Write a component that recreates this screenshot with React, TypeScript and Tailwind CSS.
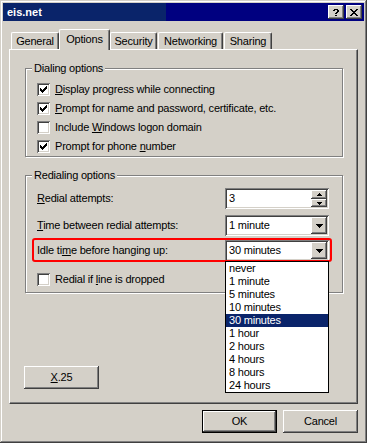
import React from 'react';

// classic win2k bevels
const raised =
  'shadow-[inset_-1px_-1px_#404040,inset_1px_1px_#fff,inset_-2px_-2px_#808080,inset_2px_2px_#d4d0c8]';
const sunken =
  'shadow-[inset_1px_1px_#808080,inset_-1px_-1px_#fff,inset_2px_2px_#404040,inset_-2px_-2px_#d4d0c8]';

const CHECK = ['......#', '.....##', '#...###', '##.###.', '#####..', '.###...', '..#....'];
const CLOSE = ['##....##', '.##..##.', '..####..', '...##...', '..####..', '.##..##.', '##....##'];
const HELP = ['..####..', '.##..##.', '.....##.', '....##..', '...##...', '........', '...##...'];
const DOWN = ['#######', '.#####.', '..###..', '...#...'];
const SPIN_UP = ['..#..', '.###.', '#####'];
const SPIN_DOWN = ['#####', '.###.', '..#..'];

const Pixels = ({ rows, color = '#000' }: { rows: string[]; color?: string }) => (
  <svg width={rows[0].length} height={rows.length} shapeRendering="crispEdges" className="block">
    {rows.flatMap((r, y) =>
      r.split('').map((c, x) =>
        c === '#' ? <rect key={`${x}-${y}`} x={x} y={y} width={1} height={1} fill={color} /> : null
      )
    )}
  </svg>
);

const TitleButton = ({ rows }: { rows: string[] }) => (
  <div className={`w-[16px] h-[14px] bg-[#d4d0c8] flex items-center justify-center ${raised}`}>
    <Pixels rows={rows} />
  </div>
);

const Checkbox = ({ checked }: { checked?: boolean }) => (
  <div className={`w-[13px] h-[13px] shrink-0 bg-white flex items-center justify-center ${sunken}`}>
    {checked && <Pixels rows={CHECK} />}
  </div>
);

const CheckRow = ({ checked, children }: { checked?: boolean; children: React.ReactNode }) => (
  <div className="h-[19px] flex items-center gap-[5px]">
    <Checkbox checked={checked} />
    <span>{children}</span>
  </div>
);

const Combo = ({ value }: { value: string }) => (
  <div className={`w-[104px] h-[21px] bg-white flex items-center p-[2px] ${sunken}`}>
    <span className="flex-1 pl-[2px]">{value}</span>
    <div className={`w-[16px] h-[17px] bg-[#d4d0c8] flex items-center justify-center ${raised}`}>
      <Pixels rows={DOWN} />
    </div>
  </div>
);

const Button = ({ children, isDefault }: { children: React.ReactNode; isDefault?: boolean }) => (
  <div className={`w-[75px] h-[23px] ${isDefault ? 'border border-black' : ''}`}>
    <div className={`w-full h-full bg-[#d4d0c8] flex items-center justify-center ${raised}`}>{children}</div>
  </div>
);

const GroupBox = ({ label, className, children }: { label: string; className: string; children: React.ReactNode }) => (
  <div className={`relative ml-[15px] mt-[18px] w-[318px] border border-[#808080] shadow-[inset_1px_1px_#fff,1px_1px_#fff] ${className}`}>
    <span className="absolute top-[-7px] left-[6px] px-[2px] bg-[#d4d0c8]">{label}</span>
    {children}
  </div>
);

const Tab = ({ label, selected, w }: { label: string; selected?: boolean; w: string }) => (
  <div
    className={`${w} flex items-center justify-center bg-[#d4d0c8] border-l border-t border-r border-l-white border-t-white border-r-[#404040] rounded-t-[2px] shadow-[inset_-1px_0_#808080] ${
      selected ? 'relative z-10 h-[21px] -mb-[1px] pb-[2px]' : 'h-[17px]'
    }`}
  >
    {label}
  </div>
);

const times = ['never', '1 minute', '5 minutes', '10 minutes', '30 minutes', '1 hour', '2 hours', '4 hours', '8 hours', '24 hours'];

export default function App() {
  return (
    <div
      className={`w-[367px] h-[443px] bg-[#d4d0c8] p-[3px] flex flex-col font-['Liberation_Sans',Arial,sans-serif] text-[11px] leading-[13px] tracking-[-0.2px] text-black shadow-[inset_-1px_-1px_#404040,inset_1px_1px_#d4d0c8,inset_-2px_-2px_#808080,inset_2px_2px_#fff]`}
    >
      {/* Title bar */}
      <div className="h-[18px] flex items-center pl-[4px] pr-[2px] bg-[linear-gradient(to_right,#0a246a_0,#0a246a_163px,#000080_163px)]">
        <span className="font-bold text-white tracking-normal">eis.net</span>
        <div className="ml-auto flex gap-[2px]">
          <TitleButton rows={HELP} />
          <TitleButton rows={CLOSE} />
        </div>
      </div>

      <div className="mt-[8px] ml-[6px] w-[349px]">
        {/* Tabs */}
        <div className="h-[20px] flex items-end pl-[2px]">
          <Tab label="General" w="w-[48px]" />
          <Tab label="Options" w="w-[51px]" selected />
          <Tab label="Security" w="w-[47px]" />
          <div className="w-[1px]" />
          <Tab label="Networking" w="w-[65px]" />
          <div className="w-[1px]" />
          <Tab label="Sharing" w="w-[48px]" />
        </div>

        {/* Panel */}
        <div className="h-[355px] flex flex-col border border-l-white border-t-white border-r-[#404040] border-b-[#404040] shadow-[inset_-1px_-1px_#808080]">
          <GroupBox label="Dialing options" className="h-[89px] pt-[11px] pl-[11px]">
            <CheckRow checked>
              <u>D</u>isplay progress while connecting
            </CheckRow>
            <CheckRow checked>
              <u>P</u>rompt for name and password, certificate, etc.
            </CheckRow>
            <CheckRow>
              Include <u>W</u>indows logon domain
            </CheckRow>
            <CheckRow checked>
              Prompt for phone <u>n</u>umber
            </CheckRow>
          </GroupBox>

          <GroupBox label="Redialing options" className="h-[118px] pt-[12px] pl-[11px] pr-[13px]">
            <div className="h-[21px] flex items-center justify-between">
              <span>
                <u>R</u>edial attempts:
              </span>
              <div className={`w-[104px] h-[21px] bg-white flex items-center p-[2px] ${sunken}`}>
                <span className="flex-1 pl-[2px]">3</span>
                <div className="flex flex-col">
                  <div className={`w-[16px] h-[9px] bg-[#d4d0c8] flex items-center justify-center ${raised}`}>
                    <Pixels rows={SPIN_UP} />
                  </div>
                  <div className={`w-[16px] h-[8px] bg-[#d4d0c8] flex items-center justify-center ${raised}`}>
                    <Pixels rows={SPIN_DOWN} />
                  </div>
                </div>
              </div>
            </div>

            <div className="mt-[6px] h-[21px] flex items-center justify-between">
              <span>
                <u>T</u>ime between redial attempts:
              </span>
              <Combo value="1 minute" />
            </div>

            <div className="relative mt-[4px] h-[21px] flex items-center justify-between">
              <span>
                Idle ti<u>m</u>e before hanging up:
              </span>
              <Combo value="30 minutes" />
              {/* red annotation */}
              <div className="absolute left-[-5px] top-[-2px] w-[300px] h-[24px] border-2 border-[#ff0000] rounded-[3px] pointer-events-none" />
              {/* open list */}
              <div className="absolute left-[188px] top-[21px] z-20 w-[104px] h-[132px] bg-white border border-black">
                {times.map((t) => (
                  <div
                    key={t}
                    className={`h-[13px] pl-[3px] ${t === '30 minutes' ? 'bg-[#0a246a] text-white' : ''}`}
                  >
                    {t}
                  </div>
                ))}
              </div>
            </div>

            <div className="mt-[9px]">
              <CheckRow>
                Redial if <u>l</u>ine is dropped
              </CheckRow>
            </div>
          </GroupBox>

          <div className="ml-[14px] mt-[73px]">
            <Button>
              <span>
                <u>X</u>.25
              </span>
            </Button>
          </div>
        </div>

        {/* Dialog buttons */}
        <div className="mt-[6px] flex justify-end gap-[6px]">
          <Button isDefault>OK</Button>
          <Button>Cancel</Button>
        </div>
      </div>
    </div>
  );
}
